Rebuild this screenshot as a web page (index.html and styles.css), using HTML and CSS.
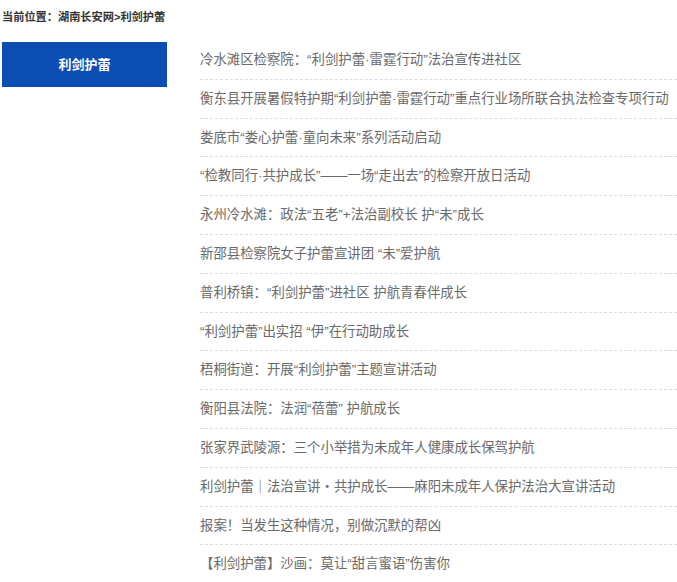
FILE: index.html
```html
<!DOCTYPE html>
<html lang="zh-CN">
<head>
<meta charset="utf-8">
<title>利剑护蕾</title>
<link rel="stylesheet" href="styles.css">
</head>
<body>
<div class="page">
  <div class="crumb">当前位置：湖南长安网&gt;利剑护蕾</div>
  <div class="main">
    <div class="side">
      <div class="side-title">利剑护蕾</div>
    </div>
    <ul class="list">
      <li>冷水滩区检察院：“利剑护蕾·雷霆行动”法治宣传进社区</li>
      <li>衡东县开展暑假特护期“利剑护蕾·雷霆行动”重点行业场所联合执法检查专项行动</li>
      <li>娄底市“娄心护蕾·童向未来”系列活动启动</li>
      <li>“检教同行·共护成长”——一场“走出去”的检察开放日活动</li>
      <li>永州冷水滩：政法“五老”+法治副校长 护“未”成长</li>
      <li>新邵县检察院女子护蕾宣讲团 “未”爱护航</li>
      <li>普利桥镇：“利剑护蕾”进社区 护航青春伴成长</li>
      <li>“利剑护蕾”出实招 “伊”在行动助成长</li>
      <li>梧桐街道：开展“利剑护蕾”主题宣讲活动</li>
      <li>衡阳县法院：法润“蓓蕾” 护航成长</li>
      <li>张家界武陵源：三个小举措为未成年人健康成长保驾护航</li>
      <li>利剑护蕾｜法治宣讲・共护成长——麻阳未成年人保护法治大宣讲活动</li>
      <li>报案！当发生这种情况，别做沉默的帮凶</li>
      <li>【利剑护蕾】沙画：莫让“甜言蜜语”伤害你</li>
    </ul>
  </div>
</div>
</body>
</html>
```

FILE: styles.css
```css
html, body {
  margin: 0;
  padding: 0;
  background: #ffffff;
}

body {
  font-family: "Liberation Sans", "Noto Sans CJK SC", sans-serif;
}

.page {
  padding: 7px 0 0 2px;
}

.crumb {
  font-size: 11.2px;
  font-weight: bold;
  color: #333333;
  line-height: 20px;
  height: 20px;
}

.main {
  display: flex;
  align-items: flex-start;
  margin-top: 14px;
}

.side {
  width: 165px;
  flex: none;
  padding-top: 1px;
}

.side-title {
  height: 45px;
  line-height: 45px;
  background: #0b4db3;
  color: #ffffff;
  font-size: 13px;
  font-weight: bold;
  text-align: center;
}

.list {
  list-style: none;
  margin: 0 0 0 33px;
  padding: 0;
  flex: 1;
}

.list li {
  height: 37.8px;
  line-height: 37.8px;
  font-size: 13.4px;
  color: #6a6a6a;
  border-bottom: 1px dashed #dddddd;
  white-space: nowrap;
}
```
